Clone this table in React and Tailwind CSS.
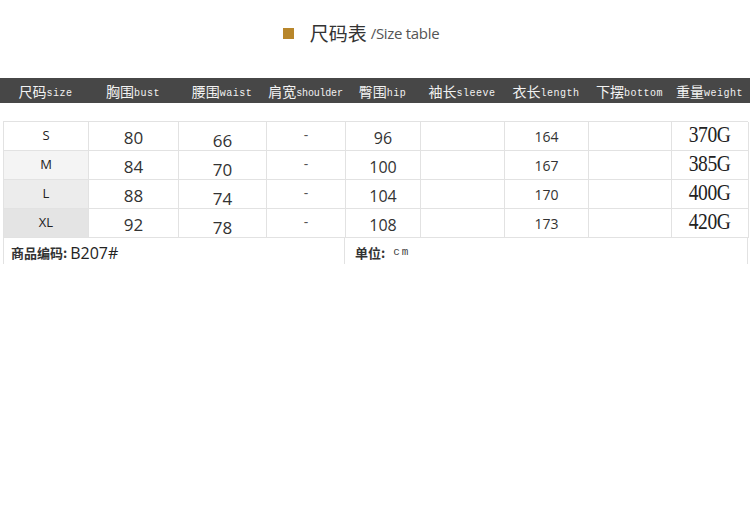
const CJK = { fontFamily: '"Noto Sans CJK SC", sans-serif' };
const SANS = { fontFamily: '"Open Sans", "Noto Sans", "Noto Sans CJK SC", sans-serif' };
const MONO = { fontFamily: '"Liberation Mono", "DejaVu Sans Mono", monospace' };
const SERIF = { fontFamily: '"Liberation Serif", "Noto Serif", serif' };

const cols = "grid-cols-[85px_90px_88px_79px_75px_84px_84px_83px_77px]";

const headers = [
  ["尺码", "size"],
  ["胸围", "bust"],
  ["腰围", "waist"],
  ["肩宽", "shoulder"],
  ["臀围", "hip"],
  ["袖长", "sleeve"],
  ["衣长", "length"],
  ["下摆", "bottom"],
  ["重量", "weight"],
];

const rows = [
  { s: "S", bust: "80", waist: "66", hip: "96", len: "164", w: "370G", bg: "bg-white" },
  { s: "M", bust: "84", waist: "70", hip: "100", len: "167", w: "385G", bg: "bg-[#f4f4f4]" },
  { s: "L", bust: "88", waist: "74", hip: "104", len: "170", w: "400G", bg: "bg-[#ececec]" },
  { s: "XL", bust: "92", waist: "78", hip: "108", len: "173", w: "420G", bg: "bg-[#e4e4e4]" },
];

function Cell({ children, className = "" }) {
  return (
    <div className={`h-[29px] border-r border-b border-[#e2e2e2] flex justify-center ${className}`}>
      {children}
    </div>
  );
}

export default function App() {
  return (
    <div className="w-[750px] h-[523px] bg-white relative overflow-hidden text-[#222]">
      {/* title */}
      <div className="h-[78px] flex items-start justify-center pt-[20px]">
        <div className="flex items-center ml-[-28px]">
          <div className="w-[11px] h-[11px] bg-[#b8862b] mr-[16px]"></div>
          <span className="text-[19px] text-[#333] leading-[26px]" style={CJK}>尺码表</span>
          <span className="text-[15px] text-[#555] ml-[4px] leading-[26px] tracking-[-0.3px]" style={SANS}>/Size table</span>
        </div>
      </div>

      {/* header bar */}
      <div className="h-[25px] bg-[#474747] flex">
        <div className={`grid ${cols} ml-[3px] h-full`}>
          {headers.map(([cn, en]) => (
            <div key={en} className="h-full flex items-end justify-center pb-[4px] text-[#f2f2f2] whitespace-nowrap">
              <span className="text-[14px] leading-[16px]" style={CJK}>{cn}</span>
              <span className={`text-[10px] leading-[11px] ${en === "shoulder" ? "tracking-[-0.2px]" : "tracking-[0.5px]"}`} style={MONO}>{en}</span>
            </div>
          ))}
        </div>
      </div>

      {/* table */}
      <div className="mt-[18px] ml-[3px] w-[745px]">
        <div className={`grid ${cols} border-l border-t border-[#e2e2e2]`}>
          {rows.map((r) => [
            <Cell key={r.s + "a"} className={`${r.bg} items-center text-[13px] text-[#222] pb-[1px]`}>
              <span style={SANS}>{r.s}</span>
            </Cell>,
            <Cell key={r.s + "b"} className="items-start pt-[3px] text-[17px] text-[#333]">
              <span style={SANS}>{r.bust}</span>
            </Cell>,
            <Cell key={r.s + "c"} className="items-start pt-[6px] text-[17px] text-[#333]">
              <span style={SANS}>{r.waist}</span>
            </Cell>,
            <Cell key={r.s + "d"} className="items-start pt-[2px] text-[14px] text-[#555]">
              <span style={SANS}>-</span>
            </Cell>,
            <Cell key={r.s + "e"} className="items-start pt-[4px] text-[16px] text-[#333]">
              <span style={SANS}>{r.hip}</span>
            </Cell>,
            <Cell key={r.s + "f"} className="" />,
            <Cell key={r.s + "g"} className="items-start pt-[4px] text-[14px] text-[#333]">
              <span style={SANS}>{r.len}</span>
            </Cell>,
            <Cell key={r.s + "h"} className="" />,
            <Cell key={r.s + "i"} className="items-start pt-[1px] text-[23px] text-[#222] tracking-[-0.5px]">
              <span style={SERIF} className="leading-[24px] scale-x-[0.85] inline-block">{r.w}</span>
            </Cell>,
          ])}
        </div>
        <div className="flex h-[26px]">
          <div className="w-[342px] border-l border-r border-[#e2e2e2] flex items-center pl-[7px] pt-[3px]">
            <span className="text-[13px] font-bold text-[#333]" style={CJK}>商品编码:</span>
            <span className="text-[16px] text-[#222] ml-[3px]" style={SANS}>B207#</span>
          </div>
          <div className="flex-1 border-r border-[#e2e2e2] flex items-center pl-[10px] pt-[3px]">
            <span className="text-[13px] font-bold text-[#333]" style={CJK}>单位:</span>
            <span className="text-[11px] text-[#444] ml-[8px] tracking-[2px]" style={MONO}>cm</span>
          </div>
        </div>
      </div>
    </div>
  );
}
